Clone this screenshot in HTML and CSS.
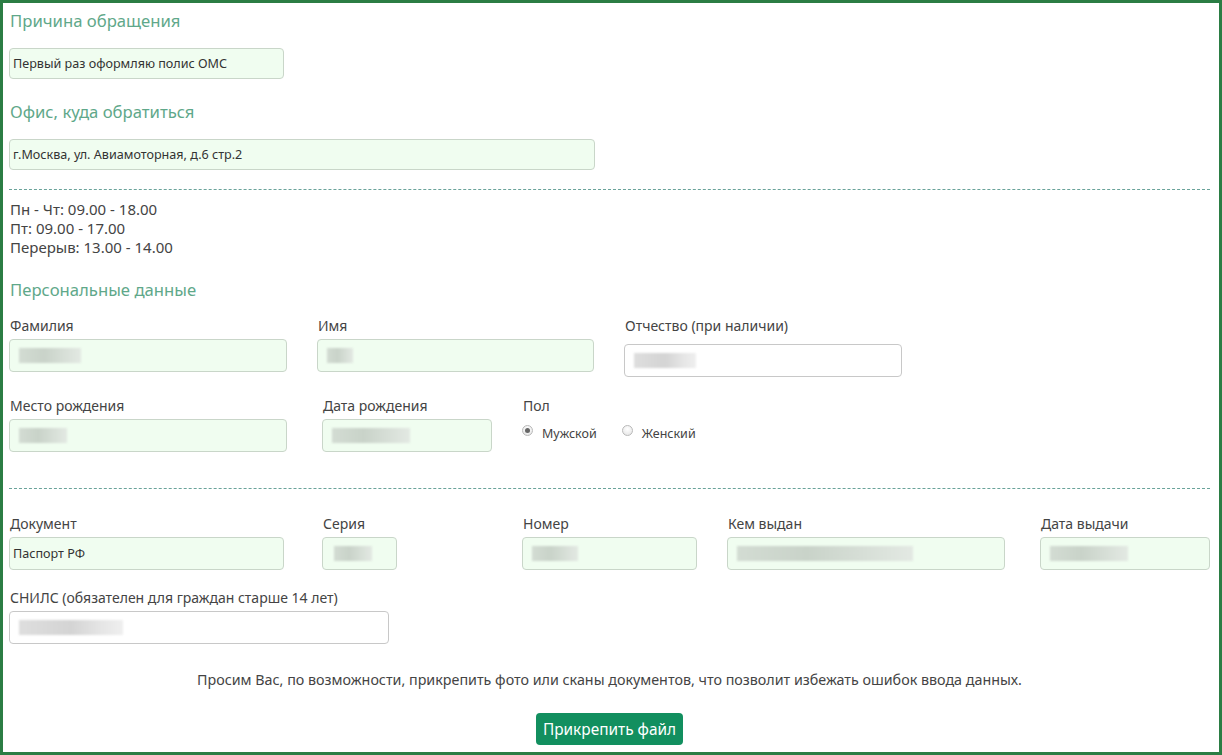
FILE: index.html
```html
<!DOCTYPE html>
<html lang="ru">
<head>
<meta charset="utf-8">
<title>Заявка</title>
<link rel="stylesheet" href="styles.css">
</head>
<body>
<div class="frame">
  <h2 class="title t1">Причина обращения</h2>
  <div class="field fill w-reason"><span class="val">Первый раз оформляю полис ОМС</span></div>

  <h2 class="title t2">Офис, куда обратиться</h2>
  <div class="field fill w-office"><span class="val">г.Москва, ул. Авиамоторная, д.6 стр.2</span></div>

  <div class="sep sep1"></div>

  <div class="hours">
    <div>Пн - Чт: 09.00 - 18.00</div>
    <div>Пт: 09.00 - 17.00</div>
    <div>Перерыв: 13.00 - 14.00</div>
  </div>

  <h2 class="title t3">Персональные данные</h2>

  <div class="row row1">
    <div class="col c-278 g30">
      <div class="label">Фамилия</div>
      <div class="field fill tall"><span class="blur" style="width:62px"></span></div>
    </div>
    <div class="col c-277 g30">
      <div class="label">Имя</div>
      <div class="field fill tall"><span class="blur" style="width:26px"></span></div>
    </div>
    <div class="col c-278 down5">
      <div class="label">Отчество (при наличии)</div>
      <div class="field white tall"><span class="blur" style="width:62px"></span></div>
    </div>
  </div>

  <div class="row row2">
    <div class="col c-278 g35">
      <div class="label">Место рождения</div>
      <div class="field fill tall"><span class="blur" style="width:48px"></span></div>
    </div>
    <div class="col c-170 g30">
      <div class="label">Дата рождения</div>
      <div class="field fill tall"><span class="blur" style="width:78px"></span></div>
    </div>
    <div class="col">
      <div class="label">Пол</div>
      <div class="radios">
        <label class="radio"><span class="dot on"></span>Мужской</label>
        <label class="radio"><span class="dot"></span>Женский</label>
      </div>
    </div>
  </div>

  <div class="sep sep2"></div>

  <div class="row row3">
    <div class="col c-275 g38">
      <div class="label">Документ</div>
      <div class="field fill tall doc"><span class="val">Паспорт РФ</span></div>
    </div>
    <div class="col c-75 g125">
      <div class="label">Серия</div>
      <div class="field fill tall pad-l"><span class="blur" style="width:38px"></span></div>
    </div>
    <div class="col c-175 g30">
      <div class="label">Номер</div>
      <div class="field fill tall"><span class="blur" style="width:46px"></span></div>
    </div>
    <div class="col c-278 g35">
      <div class="label">Кем выдан</div>
      <div class="field fill tall"><span class="blur" style="width:176px"></span></div>
    </div>
    <div class="col c-170">
      <div class="label">Дата выдачи</div>
      <div class="field fill tall"><span class="blur" style="width:78px"></span></div>
    </div>
  </div>

  <div class="snils">
    <div class="label">СНИЛС (обязателен для граждан старше 14 лет)</div>
    <div class="field white tall w-snils"><span class="blur" style="width:104px"></span></div>
  </div>

  <p class="note">Просим Вас, по возможности, прикрепить фото или сканы документов, что позволит избежать ошибок ввода данных.</p>

  <div class="actions">
    <button class="btn" type="button">Прикрепить файл</button>
  </div>
</div>
</body>
</html>
```

FILE: styles.css
```css
* { box-sizing: border-box; }
html, body { margin: 0; padding: 0; background: #fff; }
body {
  font-family: "Noto Sans", "Open Sans", sans-serif;
  color: #444;
}
.frame {
  width: 1222px;
  height: 755px;
  border: 3px solid #2b7d44;
  padding: 0 9px 0 6px;
  overflow: hidden;
}
.title {
  margin: 0;
  font-weight: normal;
  font-size: 16.7px;
  line-height: 24px;
  color: #5fa88a;
  padding-left: 1px;
}
.t1 { margin-top: 6px; }
.t2 { margin-top: 21px; }
.t3 { margin-top: 21px; }

.field {
  display: flex;
  align-items: center;
  height: 31px;
  border: 1px solid #c9d6c9;
  border-radius: 4px;
  padding-left: 3px;
  font-size: 12.6px;
  color: #333;
}
.field.tall { height: 33px; padding-left: 9px; }
.field.fill { background: #f0fdf0; }
.field.white { background: #fff; border-color: #c8c8c8; }
.field.pad-l { padding-left: 11px; }
.field.doc { padding-left: 3px; }
.t1 + .field { margin-top: 15px; }
.t2 + .field { margin-top: 15px; }
.w-reason { width: 275px; }
.w-office { width: 586px; }
.w-snils { width: 380px; }

.blur {
  display: inline-block;
  height: 15px;
  background: linear-gradient(90deg, #d3dcd3, #c9d3c9 40%, #d6ded6 70%, #e3e9e3);
  filter: blur(1.2px);
}
.white .blur { background: linear-gradient(90deg, #dedede, #d4d4d4 50%, #e6e6e6 80%, #efefef); }

.sep {
  border-top: 1px dashed #6aa39a;
}
.sep1 { margin-top: 19px; }
.sep2 { margin-top: 36px; }

.hours {
  margin-top: 10px;
  font-size: 15px;
  line-height: 19px;
  padding-left: 1px;
}

.row { display: flex; align-items: flex-start; }
.row1 { margin-top: 14px; }
.row2 { margin-top: 19px; }
.row3 { margin-top: 25px; }
.col { display: flex; flex-direction: column; }
.c-278 { width: 278px; }
.c-277 { width: 277px; }
.c-275 { width: 275px; }
.c-170 { width: 170px; }
.c-175 { width: 175px; }
.c-75 { width: 75px; }
.g30 { margin-right: 30px; }
.g35 { margin-right: 35px; }
.g38 { margin-right: 38px; }
.g125 { margin-right: 125px; }
.down5 .field { margin-top: 5px; }

.label {
  font-size: 14px;
  line-height: 19px;
  padding-left: 1px;
  margin-bottom: 4px;
  color: #444;
}

.radios { display: flex; gap: 25px; margin-top: 6px; }
.radio {
  display: flex;
  align-items: center;
  font-size: 12.5px;
  color: #444;
}
.dot {
  width: 11px;
  height: 11px;
  border-radius: 50%;
  border: 1px solid #b9b9b9;
  background: radial-gradient(circle at 50% 35%, #fff, #e2e2e2);
  margin: 0 9px 0 0;
  position: relative;
  top: -3px;
}
.dot.on::after {
  content: "";
  position: absolute;
  left: 2px; top: 2px;
  width: 5px; height: 5px;
  border-radius: 50%;
  background: #666;
}

.snils { margin-top: 18px; }

.note {
  margin: 26px 0 0;
  text-align: center;
  font-size: 14.3px;
  line-height: 19px;
  color: #444;
}
.actions { display: flex; justify-content: center; margin-top: 24px; }
.btn {
  height: 32px;
  padding: 0 7px;
  border: 0;
  border-radius: 4px;
  background: #128f5f;
  color: #fff;
  font-family: "Noto Sans", sans-serif;
  font-size: 15.4px;
}
```
